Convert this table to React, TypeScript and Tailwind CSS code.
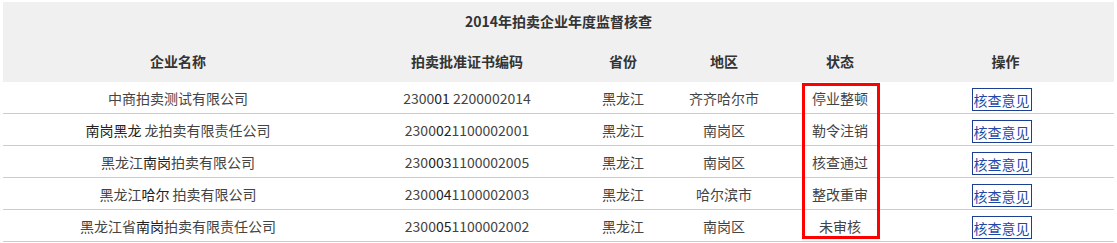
import React from 'react';

type Row = {
  name: React.ReactNode;
  code: React.ReactNode;
  province: string;
  area: string;
  status: string;
};

const dark = 'text-[#222]';

const rows: Row[] = [
  {
    name: '中商拍卖测试有限公司',
    code: <>2300<span className={dark}>01</span> 2200002014</>,
    province: '黑龙江',
    area: '齐齐哈尔市',
    status: '停业整顿',
  },
  {
    name: <><span className={dark}>南岗黑龙</span> 龙拍卖有限责任公司</>,
    code: <>2300<span className={dark}>02</span>1100002001</>,
    province: '黑龙江',
    area: '南岗区',
    status: '勒令注销',
  },
  {
    name: <>黑龙江<span className={dark}>南岗</span>拍卖有限公司</>,
    code: <>230<span className={dark}>003</span>1100002005</>,
    province: '黑龙江',
    area: '南岗区',
    status: '核查通过',
  },
  {
    name: <>黑龙江<span className={dark}>哈尔</span> 拍卖有限公司</>,
    code: <>2300<span className={dark}>04</span>1100002003</>,
    province: '黑龙江',
    area: '哈尔滨市',
    status: '整改重审',
  },
  {
    name: <>黑龙江省<span className={dark}>南岗</span>拍卖有限责任公司</>,
    code: <>2300<span className={dark}>05</span>1100002002</>,
    province: '黑龙江',
    area: '南岗区',
    status: '未审核',
  },
];

const cols = 'grid grid-cols-[350px_228px_84px_118px_114px_1fr]';

export default function App() {
  return (
    <div className="w-[1117px] h-[243px] bg-white pt-[2px] px-[3px] font-['Noto_Sans_CJK_SC','Noto_Sans',sans-serif] text-[14px] text-[#444]">
      {/* head block */}
      <div className="bg-[#f0f0f0]">
        <div className="h-[38px] flex items-center justify-center font-bold text-[#333]">
          2014年拍卖企业年度监督核查
        </div>
        <div className={`${cols} h-[42px] items-center text-center font-bold text-[#333]`}>
          <div>企业名称</div>
          <div>拍卖批准证书编码</div>
          <div>省份</div>
          <div>地区</div>
          <div>状态</div>
          <div>操作</div>
        </div>
      </div>

      {/* data rows */}
      <div className="relative">
        {rows.map((r, i) => (
          <div key={i} className={`${cols} h-[32px] items-center text-center border-b border-[#cccccc]`}>
            <div className="pt-[2px]">{r.name}</div>
            <div className="pt-[2px]">{r.code}</div>
            <div className="pt-[2px]">{r.province}</div>
            <div className="pt-[2px]">{r.area}</div>
            <div className="pt-[2px]">{r.status}</div>
            <div className="flex justify-center pr-[8px] mt-[4px]">
              <button className="h-[23px] w-[60px] p-0 flex items-center justify-center border border-[#1c3f94] text-[#1f47a8] text-[14px] leading-none bg-white">
                核查意见
              </button>
            </div>
          </div>
        ))}
        {/* highlight over the status column */}
        <div className="absolute left-[799px] top-[1px] w-[78px] h-[156px] border-[3px] border-[#ff0000]" />
      </div>
    </div>
  );
}
